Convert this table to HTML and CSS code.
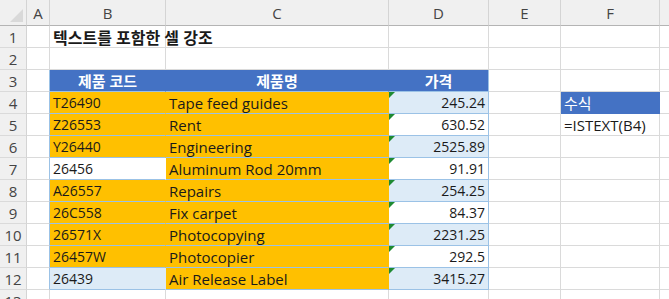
FILE: index.html
```html
<!DOCTYPE html>
<html lang="ko">
<head>
    <meta charset="UTF-8">
    <title>텍스트를 포함한 셀 강조</title>
    <link rel="stylesheet" href="styles.css">
</head>
<body>
    <div class="sheet">
        <!-- 열 머리글 -->
        <div class="corner"></div>
        <div class="colhead">A</div>
        <div class="colhead">B</div>
        <div class="colhead">C</div>
        <div class="colhead">D</div>
        <div class="colhead">E</div>
        <div class="colhead">F</div>
        <div class="colhead"></div>

        <!-- 1행 -->
        <div class="rowhead">1</div>
        <div class="cell"></div>
        <div class="cell title">텍스트를 포함한 셀 강조</div>
        <div class="cell"></div>
        <div class="cell"></div>
        <div class="cell"></div>
        <div class="cell"></div>
        <div class="cell"></div>

        <!-- 2행 -->
        <div class="rowhead">2</div>
        <div class="cell"></div>
        <div class="cell"></div>
        <div class="cell"></div>
        <div class="cell"></div>
        <div class="cell"></div>
        <div class="cell"></div>
        <div class="cell"></div>

        <!-- 3행: 표 머리글 -->
        <div class="rowhead">3</div>
        <div class="cell edge"></div>
        <div class="cell th">제품 코드</div>
        <div class="cell th">제품명</div>
        <div class="cell th last">가격</div>
        <div class="cell"></div>
        <div class="cell"></div>
        <div class="cell"></div>

        <div class="rowhead">4</div>
        <div class="cell edge"></div>
        <div class="cell td hit">T26490</div>
        <div class="cell td hit name">Tape feed guides</div>
        <div class="cell td band num last flag">245.24</div>
        <div class="cell"></div>
        <div class="cell label">수식</div>
        <div class="cell"></div>

        <div class="rowhead">5</div>
        <div class="cell edge"></div>
        <div class="cell td hit">Z26553</div>
        <div class="cell td hit name">Rent</div>
        <div class="cell td num last flag">630.52</div>
        <div class="cell"></div>
        <div class="cell formula">=ISTEXT(B4)</div>
        <div class="cell"></div>

        <div class="rowhead">6</div>
        <div class="cell edge"></div>
        <div class="cell td hit">Y26440</div>
        <div class="cell td hit name">Engineering</div>
        <div class="cell td band num last flag">2525.89</div>
        <div class="cell"></div>
        <div class="cell"></div>
        <div class="cell"></div>

        <div class="rowhead">7</div>
        <div class="cell edge"></div>
        <div class="cell td">26456</div>
        <div class="cell td hit name">Aluminum Rod 20mm</div>
        <div class="cell td num last flag">91.91</div>
        <div class="cell"></div>
        <div class="cell"></div>
        <div class="cell"></div>

        <div class="rowhead">8</div>
        <div class="cell edge"></div>
        <div class="cell td hit">A26557</div>
        <div class="cell td hit name">Repairs</div>
        <div class="cell td band num last flag">254.25</div>
        <div class="cell"></div>
        <div class="cell"></div>
        <div class="cell"></div>

        <div class="rowhead">9</div>
        <div class="cell edge"></div>
        <div class="cell td hit">26C558</div>
        <div class="cell td hit name">Fix carpet</div>
        <div class="cell td num last flag">84.37</div>
        <div class="cell"></div>
        <div class="cell"></div>
        <div class="cell"></div>

        <div class="rowhead">10</div>
        <div class="cell edge"></div>
        <div class="cell td hit">26571X</div>
        <div class="cell td hit name">Photocopying</div>
        <div class="cell td band num last flag">2231.25</div>
        <div class="cell"></div>
        <div class="cell"></div>
        <div class="cell"></div>

        <div class="rowhead">11</div>
        <div class="cell edge"></div>
        <div class="cell td hit">26457W</div>
        <div class="cell td hit name">Photocopier</div>
        <div class="cell td num last flag">292.5</div>
        <div class="cell"></div>
        <div class="cell"></div>
        <div class="cell"></div>

        <div class="rowhead">12</div>
        <div class="cell edge"></div>
        <div class="cell td band">26439</div>
        <div class="cell td hit name">Air Release Label</div>
        <div class="cell td band num last flag">3415.27</div>
        <div class="cell"></div>
        <div class="cell"></div>
        <div class="cell"></div>

        <div class="rowhead">13</div>
        <div class="cell"></div>
        <div class="cell"></div>
        <div class="cell"></div>
        <div class="cell"></div>
        <div class="cell"></div>
        <div class="cell"></div>
        <div class="cell"></div>
    </div>
</body>
</html>
```

FILE: styles.css
```css
html, body {
    margin: 0;
    height: 299px;
    overflow: hidden;
    background: #ffffff;
}

.sheet {
    display: grid;
    grid-template-columns: 27px 23px 116px 223px 100px 72px 99px 60px;
    grid-template-rows: 26px repeat(13, 22px);
    font-family: "Open Sans", "Noto Sans CJK KR", sans-serif;
    font-size: 14px;
    color: #1a1a1a;
}

.sheet > div {
    box-sizing: border-box;
    white-space: nowrap;
    display: flex;
    align-items: center;
}

/* 머리글 */
.corner,
.colhead,
.rowhead {
    background: #f0f0f0;
    color: #444444;
    font-size: 15px;
}

.corner {
    position: relative;
    border-right: 1px solid #d4d4d4;
    border-bottom: 1px solid #b4b4b4;
}

.corner::after {
    content: "";
    position: absolute;
    right: 3px;
    bottom: 3px;
    border-left: 13px solid transparent;
    border-bottom: 13px solid #d9d9d9;
}

.colhead {
    justify-content: center;
    border-right: 1px solid #d4d4d4;
    border-bottom: 1px solid #b4b4b4;
}

.rowhead {
    justify-content: center;
    border-right: 1px solid #d4d4d4;
    border-bottom: 1px solid #dadada;
}

/* 일반 셀 */
.cell {
    padding: 0 3px;
    border-right: 1px solid #dadada;
    border-bottom: 1px solid #dadada;
}

.title {
    font-weight: bold;
    font-size: 16px;
}

.name,
.formula {
    font-size: 15px;
}

.edge {
    border-right-color: #9bc2e6;
}

/* 표 */
.th {
    background: #4472c4;
    color: #ffffff;
    justify-content: center;
    border-right-color: #4472c4;
    border-bottom-color: #9bc2e6;
    font-weight: bold;
    font-size: 15px;
}

.td {
    border-right-color: transparent;
    border-bottom-color: #9bc2e6;
}

.band {
    background: #ddebf7;
}

.hit {
    background: #ffc000;
}

.num {
    justify-content: flex-end;
}

.last {
    border-right-color: #9bc2e6;
}

.flag {
    position: relative;
}

.flag::before {
    content: "";
    position: absolute;
    left: 0;
    top: 0;
    border-top: 6px solid #1e8a32;
    border-right: 6px solid transparent;
}

.label {
    background: #4472c4;
    color: #ffffff;
    font-size: 15px;
    border-right-color: #4472c4;
    border-bottom-color: #4472c4;
}
```
